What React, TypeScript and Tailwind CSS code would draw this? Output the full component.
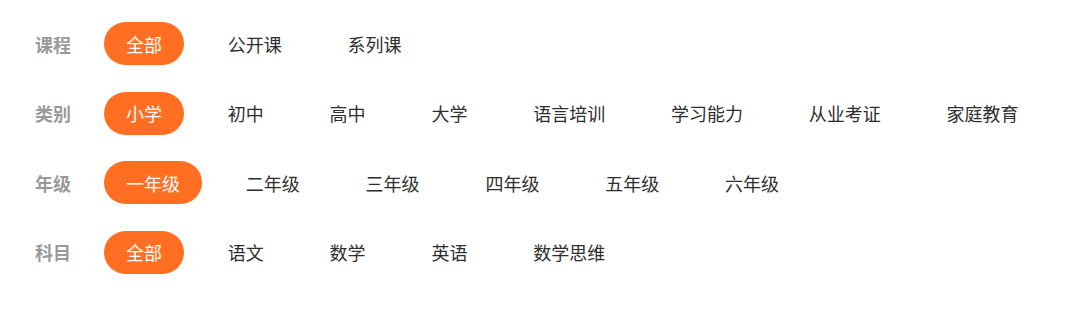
const rows: { label: string; items: string[] }[] = [
  { label: '课程', items: ['全部', '公开课', '系列课'] },
  { label: '类别', items: ['小学', '初中', '高中', '大学', '语言培训', '学习能力', '从业考证', '家庭教育'] },
  { label: '年级', items: ['一年级', '二年级', '三年级', '四年级', '五年级', '六年级'] },
  { label: '科目', items: ['全部', '语文', '数学', '英语', '数学思维'] },
];

export default function App() {
  return (
    <div
      className="w-[1080px] h-[319px] bg-white pt-[22px] pl-[35px] flex flex-col gap-[26.5px]"
      style={{ fontFamily: '"Noto Sans CJK SC", "Noto Sans", sans-serif' }}
    >
      {rows.map((row) => (
        <div key={row.label} className="flex items-center h-[43px]">
          <span className="w-[69px] shrink-0 text-[18px] font-semibold text-[#9a9a9a] leading-none">
            {row.label}
          </span>
          <div className="flex items-center gap-[21.8px]">
            {row.items.map((item, i) => (
              <span
                key={item}
                className={
                  i === 0
                    ? 'h-[43px] px-[22px] rounded-full bg-[#ff6e21] text-white text-[18px] flex items-center leading-none'
                    : 'h-[43px] px-[22px] rounded-full text-[#2e2e2e] text-[18px] flex items-center leading-none'
                }
              >
                {item}
              </span>
            ))}
          </div>
        </div>
      ))}
    </div>
  );
}
